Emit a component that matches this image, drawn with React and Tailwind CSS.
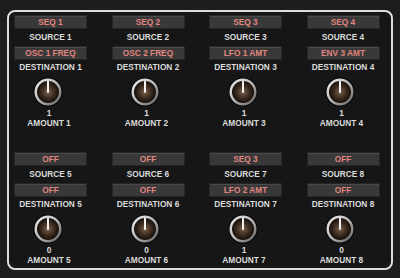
import React from 'react';

const slots = [
  { n: 1, src: 'SEQ 1', dst: 'OSC 1 FREQ', amt: 1 },
  { n: 2, src: 'SEQ 2', dst: 'OSC 2 FREQ', amt: 1 },
  { n: 3, src: 'SEQ 3', dst: 'LFO 1 AMT', amt: 1 },
  { n: 4, src: 'SEQ 4', dst: 'ENV 3 AMT', amt: 1 },
  { n: 5, src: 'OFF', dst: 'OFF', amt: 0 },
  { n: 6, src: 'OFF', dst: 'OFF', amt: 0 },
  { n: 7, src: 'SEQ 3', dst: 'LFO 2 AMT', amt: 1 },
  { n: 8, src: 'OFF', dst: 'OFF', amt: 0 },
];

function Knob({ id }) {
  return (
    <svg width="30" height="30" viewBox="0 0 30 30" className="mr-[6px]">
      <defs>
        <linearGradient id={`ring${id}`} x1="0" y1="0" x2="1" y2="1">
          <stop offset="0" stopColor="#f4f4f4" />
          <stop offset="0.5" stopColor="#b8b8b8" />
          <stop offset="1" stopColor="#5a5a5a" />
        </linearGradient>
        <radialGradient id={`cap${id}`} cx="0.5" cy="0.5" r="0.5">
          <stop offset="0" stopColor="#7a624c" />
          <stop offset="0.55" stopColor="#3e2e22" />
          <stop offset="1" stopColor="#170f0a" />
        </radialGradient>
      </defs>
      <circle cx="15" cy="15" r="14.5" fill="#050505" />
      <circle cx="15" cy="15" r="13.5" fill={`url(#ring${id})`} />
      <circle cx="15" cy="15" r="11" fill={`url(#cap${id})`} />
      <line x1="15" y1="4.5" x2="15" y2="15" stroke="#f2f2f2" strokeWidth="2" strokeLinecap="round" />
    </svg>
  );
}

function Slot({ s }) {
  return (
    <div className="flex flex-col items-center w-[73px]">
      <div className="w-[73px] h-[14px] bg-[#393939] border border-[#262626] shadow-[inset_0_1px_0_#4a4a4a] flex items-center justify-center text-[#e0857f]">
        {s.src}
      </div>
      <div className="h-[17px] flex items-center">SOURCE {s.n}</div>
      <div className="w-[73px] h-[14px] bg-[#393939] border border-[#262626] shadow-[inset_0_1px_0_#4a4a4a] flex items-center justify-center text-[#e0857f]">
        {s.dst}
      </div>
      <div className="h-[15px] flex items-center">DESTINATION {s.n}</div>
      <div className="h-[2px]" />
      <Knob id={s.n} />
      <div className="h-[10px] flex items-end mr-[3px]">{s.amt}</div>
      <div className="h-[12px] flex items-center mr-[3px]">AMOUNT {s.n}</div>
    </div>
  );
}

export default function App() {
  return (
    <div className="w-[400px] h-[278px] bg-[#1d1d1d] pt-[10px] pl-[7px] overflow-hidden">
      <div
        className="w-[386px] h-[260px] rounded-[8px] border-2 border-[#dcdcdc] bg-[#161616] pt-[3px] pl-[5px] grid grid-cols-[repeat(4,73px)] gap-x-[24.5px] gap-y-[23px] content-start text-[#dcdcdc] text-[8.3px] font-bold leading-none"
        style={{ fontFamily: '"Liberation Sans", Arial, sans-serif' }}
      >
        {slots.map((s) => (
          <Slot key={s.n} s={s} />
        ))}
      </div>
    </div>
  );
}
